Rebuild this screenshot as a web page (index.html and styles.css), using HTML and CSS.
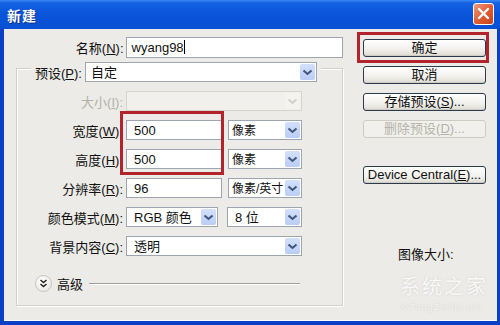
FILE: index.html
```html
<!DOCTYPE html>
<html lang="zh-CN">
<head>
    <meta charset="UTF-8">
    <title>新建</title>
    <link rel="stylesheet" href="styles.css">
</head>
<body>
    <div class="window">
        <div class="titlebar">
            <span class="title">新建</span>
            <span class="close">
                <svg width="13" height="13" viewBox="0 0 13 13"><path d="M2 2 L11 11 M11 2 L2 11" stroke="#fff" stroke-width="2.4" stroke-linecap="round"/></svg>
            </span>
        </div>
        <div class="body">
            <div class="form">
                <div class="name-row">
                    <label class="lbl">名称(<u>N</u>):</label>
                    <div class="field name-field">wyang98<span class="caret"></span></div>
                </div>

                <div class="group">
                    <div class="group-head">
                        <label>预设(<u>P</u>):</label>
                        <div class="field select preset">自定
                            <span class="arrow"><svg width="11" height="7" viewBox="0 0 11 7"><path d="M1.5 1.5 L5.5 5 L9.5 1.5" fill="none" stroke="#3f5478" stroke-width="2"/></svg></span>
                        </div>
                    </div>

                    <div class="row">
                        <label class="lbl off">大小(<u>I</u>):</label>
                        <div class="field select full disabled">
                            <span class="arrow"><svg width="11" height="7" viewBox="0 0 11 7"><path d="M1.5 1.5 L5.5 5 L9.5 1.5" fill="none" stroke="#d0d0cb" stroke-width="2"/></svg></span>
                        </div>
                    </div>
                    <div class="row">
                        <label class="lbl">宽度(<u>W</u>):</label>
                        <div class="field num">500</div>
                        <div class="field select unit">像素
                            <span class="arrow"><svg width="11" height="7" viewBox="0 0 11 7"><path d="M1.5 1.5 L5.5 5 L9.5 1.5" fill="none" stroke="#3f5478" stroke-width="2"/></svg></span>
                        </div>
                    </div>
                    <div class="row">
                        <label class="lbl">高度(<u>H</u>):</label>
                        <div class="field num">500</div>
                        <div class="field select unit">像素
                            <span class="arrow"><svg width="11" height="7" viewBox="0 0 11 7"><path d="M1.5 1.5 L5.5 5 L9.5 1.5" fill="none" stroke="#3f5478" stroke-width="2"/></svg></span>
                        </div>
                    </div>
                    <div class="row">
                        <label class="lbl">分辨率(<u>R</u>):</label>
                        <div class="field num">96</div>
                        <div class="field select unit">像素/英寸
                            <span class="arrow"><svg width="11" height="7" viewBox="0 0 11 7"><path d="M1.5 1.5 L5.5 5 L9.5 1.5" fill="none" stroke="#3f5478" stroke-width="2"/></svg></span>
                        </div>
                    </div>
                    <div class="row">
                        <label class="lbl">颜色模式(<u>M</u>):</label>
                        <div class="field select mode">RGB 颜色
                            <span class="arrow"><svg width="11" height="7" viewBox="0 0 11 7"><path d="M1.5 1.5 L5.5 5 L9.5 1.5" fill="none" stroke="#3f5478" stroke-width="2"/></svg></span>
                        </div>
                        <div class="field select bits">8 位
                            <span class="arrow"><svg width="11" height="7" viewBox="0 0 11 7"><path d="M1.5 1.5 L5.5 5 L9.5 1.5" fill="none" stroke="#3f5478" stroke-width="2"/></svg></span>
                        </div>
                    </div>
                    <div class="row">
                        <label class="lbl">背景内容(<u>C</u>):</label>
                        <div class="field select full">透明
                            <span class="arrow"><svg width="11" height="7" viewBox="0 0 11 7"><path d="M1.5 1.5 L5.5 5 L9.5 1.5" fill="none" stroke="#3f5478" stroke-width="2"/></svg></span>
                        </div>
                    </div>

                    <div class="advanced">
                        <span class="toggle"><svg width="9" height="9" viewBox="0 0 9 9"><path d="M1.5 1 L4.5 3.5 L7.5 1 M1.5 5 L4.5 7.5 L7.5 5" fill="none" stroke="#222" stroke-width="1.5"/></svg></span>
                        <span class="adv-text">高级</span>
                        <span class="adv-line"></span>
                    </div>

                    <!-- annotation round the width / height fields -->
                    <div class="mark mark-size"></div>
                </div>
            </div>

            <div class="buttons">
                <div class="btn-wrap">
                    <button class="btn">确定</button>
                </div>
                <button class="btn">取消</button>
                <button class="btn">存储预设(<u>S</u>)...</button>
                <button class="btn" disabled>删除预设(<u>D</u>)...</button>
                <button class="btn device">Device Central(<u>E</u>)...</button>
                <div class="img-size">图像大小:</div>
            </div>
        </div>

        <div class="watermark">
            <span class="wm-big">系统之家</span>
            <span class="wm-small">XiTongZhiJia.net</span>
        </div>
    </div>
</body>
</html>
```

FILE: styles.css
```css
body {
    margin: 0;
    font-family: Tahoma, "Liberation Sans", "Noto Sans CJK SC", sans-serif;
    font-size: 13px;
    color: #111;
}
u {
    text-decoration: underline;
    text-underline-offset: 1px;
}
.window {
    position: relative;
    width: 500px;
    height: 325px;
    background: #0a3fc6;
    overflow: hidden;
}
.titlebar {
    height: 29px;
    display: flex;
    align-items: center;
    justify-content: space-between;
    padding: 0 6px 0 7px;
    box-sizing: border-box;
    background: linear-gradient(#3b86f4 0, #1462e4 3px, #0b55db 45%, #0850d3 100%);
}
.title {
    color: #fff;
    font-weight: bold;
    font-size: 14px;
    font-family: "Noto Sans CJK SC", sans-serif;
    text-shadow: 1px 1px 0 #0b2f8a;
    letter-spacing: 1px;
}
.close {
    width: 19px;
    height: 20px;
    margin-top: -2px;
    border: 1px solid #fff;
    border-radius: 3px;
    background: linear-gradient(135deg, #ec9a7c, #e05a30 55%, #c9421b);
    display: flex;
    align-items: center;
    justify-content: center;
}
.body {
    display: flex;
    height: 291px;
    margin: 0 3px 0 4px;
    background: #ecebe7;
    border-bottom: 1px solid #fafafa;
}
.form {
    width: 339px;
}
.name-row {
    display: flex;
    align-items: center;
    margin-top: 8px;
}
.lbl {
    width: 121px;
    padding-right: 2px;
    text-align: right;
    white-space: nowrap;
    font-size: 13px;
}
.lbl.off {
    color: #b2b0a8;
}
.field {
    position: relative;
    height: 20px;
    line-height: 20px;
    box-sizing: border-box;
    border: 1px solid #9da6b0;
    background: #fff;
    padding-left: 5px;
    white-space: nowrap;
}
.name-field {
    width: 220px;
    height: 21px;
}
.caret {
    display: inline-block;
    width: 1px;
    height: 14px;
    background: #000;
    vertical-align: -2px;
}
.select .arrow {
    position: absolute;
    right: 1px;
    top: 1px;
    width: 15px;
    height: 16px;
    background: linear-gradient(#d3e0fb, #b9cdf6);
    border-radius: 2px;
    display: flex;
    align-items: center;
    justify-content: center;
}
.select.disabled {
    background: #f1f0ec;
    border-color: #d6d4cc;
}
.select.disabled .arrow {
    background: #f4f3ef;
}
.group {
    position: relative;
    margin: 10px 0 0 12px;
    width: 325px;
    height: 236px;
    border: 1px solid #d0cfc8;
    box-shadow: inset 1px 1px 0 #fff, 1px 1px 0 #fff;
}
.group-head {
    display: flex;
    align-items: center;
    width: fit-content;
    margin: -7px 0 0 14px;
    padding: 0 4px;
    background: #ecebe7;
}
.group-head label {
    padding-right: 3px;
}
.preset {
    width: 232px;
}
.row {
    display: flex;
    align-items: center;
    margin-top: 9px;
}
.row .lbl {
    width: 106px;
    padding-right: 3px;
}
.row:first-of-type {
    margin-top: 8px;
}
.num {
    width: 96px;
    padding-left: 7px;
}
.unit {
    width: 74px;
    margin-left: 6px;
    padding-left: 3px;
    font-size: 12px;
}
.mode {
    width: 92px;
    padding-left: 7px;
}
.bits {
    width: 75px;
    margin-left: 9px;
    padding-left: 7px;
}
.full {
    width: 176px;
    padding-left: 7px;
}
.advanced {
    display: flex;
    align-items: center;
    margin: 18px 0 0 18px;
}
.toggle {
    width: 15px;
    height: 15px;
    border-radius: 50%;
    border: 1px solid #c4c4c0;
    background: radial-gradient(circle at 40% 35%, #fff, #e3e3df);
    display: flex;
    align-items: center;
    justify-content: center;
}
.adv-text {
    margin-left: 5px;
}
.adv-line {
    width: 211px;
    height: 1px;
    margin-left: 6px;
    background: #9f9e99;
    box-shadow: 0 1px 0 #fff;
}
.mark {
    position: absolute;
    border: 3px solid #b3232c;
}
.mark-size {
    left: 103px;
    top: 42px;
    width: 98px;
    height: 58px;
}
.buttons {
    display: flex;
    flex-direction: column;
    margin: 10px 0 0 20px;
    width: 123px;
}
.btn-wrap {
    position: relative;
    height: 18px;
    margin-bottom: 9px;
}
.btn-wrap::after {
    content: "";
    position: absolute;
    left: -6px;
    top: -7px;
    right: -3px;
    bottom: -6px;
    border: 3px solid #b3232c;
}
.btn {
    width: 123px;
    height: 18px;
    padding: 0;
    margin-bottom: 9px;
    font-family: Tahoma, "Liberation Sans", "Noto Sans CJK SC", sans-serif;
    font-size: 13px;
    line-height: 14px;
    color: #111;
    border: 1px solid #2c3a4e;
    border-radius: 3px;
    background: linear-gradient(#ffffff, #f1f0ec 60%, #dcdad2);
    box-shadow: inset 0 -1px 0 #cfcbc0;
}
.btn-wrap .btn {
    display: block;
    margin-bottom: 0;
}
.btn:disabled {
    color: #b5b3aa;
    border-color: #cdcbc2;
    background: #f1f0ec;
    box-shadow: none;
    margin-bottom: 28px;
}
.img-size {
    margin: 54px 0 0 35px;
    font-size: 13px;
    line-height: 15px;
}
.watermark {
    position: absolute;
    left: 400px;
    top: 276px;
    display: flex;
    flex-direction: column;
    gap: 6px;
    color: rgba(255, 255, 255, 0.85);
    text-shadow: 0 0 2px rgba(160, 160, 160, 0.4);
}
.wm-big {
    font-family: "Noto Sans CJK SC", sans-serif;
    font-size: 20px;
    line-height: 20px;
    letter-spacing: 2px;
}
.wm-small {
    font-size: 9px;
    line-height: 10px;
    letter-spacing: 1px;
    color: rgba(255, 255, 255, 0.6);
}
```
